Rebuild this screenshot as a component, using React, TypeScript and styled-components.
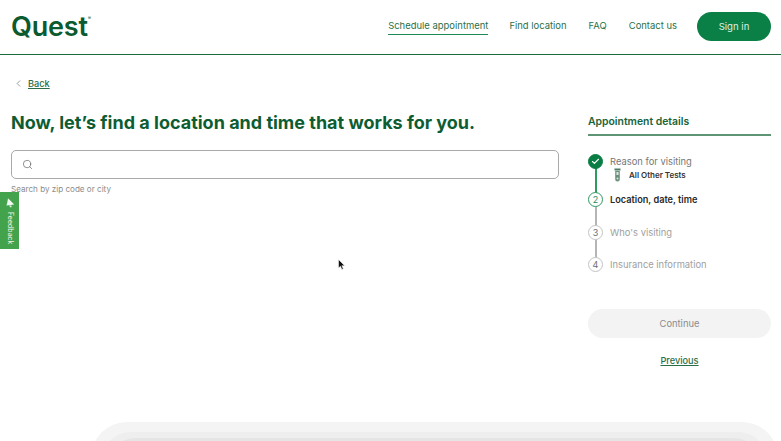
import React from "react";
import styled, { createGlobalStyle } from "styled-components";
import { Check, ChevronLeft, Search } from "lucide-react";

const GlobalStyle = createGlobalStyle`
  html, body {
    margin: 0;
    padding: 0;
    background: #fff;
  }
  body {
    font-family: "Inter", "Liberation Sans", sans-serif;
  }
`;

const Page = styled.div`
  position: relative;
  width: 781px;
  height: 441px;
  overflow: hidden;
  background: #fff;
`;

const Header = styled.header`
  box-sizing: border-box;
  height: 55px;
  padding: 0 10px 1px 11px;
  display: flex;
  align-items: center;
  justify-content: space-between;
  border-bottom: 1.5px solid #1d6a3c;
`;

const Logo = styled.div`
  font-size: 27px;
  line-height: 28px;
  font-weight: 600;
  letter-spacing: -0.2px;
  color: #0b5a30;
  sup {
    font-size: 5px;
    font-weight: 400;
    line-height: 0;
    vertical-align: 16px;
  }
`;

const Nav = styled.nav`
  display: flex;
  align-items: center;
`;

const NavItem = styled.a<{ $active?: boolean; $gap: number }>`
  font-size: 9.45px;
  line-height: 13px;
  color: #2b6f49;
  margin-right: ${(p) => p.$gap}px;
  padding: 1px 0 2px;
  border-bottom: 1px solid ${(p) => (p.$active ? "#1f8a55" : "transparent")};
`;

const SignIn = styled.button`
  width: 74px;
  height: 29px;
  border: 0;
  border-radius: 15px;
  background: #0a8047;
  color: #dff0e6;
  font-family: inherit;
  font-size: 9.6px;
`;

const Body = styled.main`
  display: flex;
  padding: 0 10px 0 11px;
`;

const Left = styled.section`
  width: 548px;
  margin-right: 29px;
`;

const BackRow = styled.div`
  display: flex;
  align-items: center;
  gap: 4px;
  margin: 21px 0 0 2px;
  height: 14px;
  color: #66776c;
`;

const UnderlinedLink = styled.a`
  font-size: 9.2px;
  font-weight: 500;
  line-height: 13px;
  color: #2a6e48;
  text-decoration: underline;
`;

const Title = styled.h1`
  margin: 20px 0 0;
  font-size: 18px;
  line-height: 26px;
  font-weight: 700;
  color: #0d5c32;
`;

const SearchBox = styled.div`
  box-sizing: border-box;
  height: 29px;
  margin-top: 14px;
  padding-left: 10px;
  display: flex;
  align-items: center;
  border: 1px solid #a9a9a9;
  border-radius: 5px;
  color: #555;
`;

const Hint = styled.div`
  margin-top: 4px;
  font-size: 8.1px;
  line-height: 12px;
  color: #8c8c8c;
`;

const Aside = styled.aside`
  width: 183px;
`;

const AsideTitle = styled.div`
  margin-top: 60px;
  padding-bottom: 5px;
  font-size: 10.4px;
  line-height: 14px;
  font-weight: 600;
  color: #17633a;
  border-bottom: 2px solid #5f9474;
`;

const Steps = styled.ol`
  list-style: none;
  margin: 18px 0 0;
  padding: 0;
`;

const Step = styled.li<{ $height: number }>`
  position: relative;
  display: flex;
  gap: 7px;
  height: ${(p) => p.$height}px;
`;

const Rail = styled.span<{ $color: string }>`
  position: absolute;
  left: 7px;
  top: 14px;
  bottom: -2px;
  width: 1.5px;
  background: ${(p) => p.$color};
`;

const Dot = styled.span<{ $state: "done" | "current" | "todo" }>`
  position: relative;
  z-index: 1;
  box-sizing: border-box;
  flex: none;
  width: 15px;
  height: 15px;
  border-radius: 50%;
  display: flex;
  align-items: center;
  justify-content: center;
  font-size: 9px;
  background: ${(p) => (p.$state === "done" ? "#0a7d45" : "#fff")};
  border: 1.5px solid
    ${(p) => (p.$state === "done" ? "#0a7d45" : p.$state === "current" ? "#2f9a63" : "#c4c4c4")};
  color: ${(p) => (p.$state === "done" ? "#fff" : p.$state === "current" ? "#2f8a5b" : "#6f6f6f")};
`;

const StepText = styled.div<{ $state: "done" | "current" | "todo" }>`
  font-size: ${(p) => (p.$state === "current" ? 9.2 : 9.4)}px;
  line-height: 15px;
  font-weight: ${(p) => (p.$state === "current" ? 600 : 400)};
  color: ${(p) => (p.$state === "current" ? "#2a2a2a" : p.$state === "done" ? "#777" : "#a0a0a0")};
`;

const Reason = styled.div`
  display: flex;
  align-items: center;
  gap: 8px;
  margin: -1px 0 0 4px;
  font-size: 8px;
  line-height: 14px;
  font-weight: 600;
  color: #333;
`;

const ContinueButton = styled.button`
  display: block;
  width: 183px;
  height: 29px;
  margin-top: 32px;
  border: 0;
  border-radius: 15px;
  background: #f3f3f3;
  color: #8c8c8c;
  font-family: inherit;
  font-size: 9.4px;
`;

const PreviousRow = styled.div`
  margin-top: 14px;
  text-align: center;
  line-height: 13px;
`;

const FeedbackTab = styled.div`
  position: absolute;
  left: 0;
  top: 192px;
  box-sizing: border-box;
  width: 19px;
  height: 57px;
  padding-top: 6px;
  display: flex;
  flex-direction: column;
  align-items: center;
  gap: 4px;
  background: #43a24c;
  color: #e8f5ea;
`;

const FeedbackLabel = styled.span`
  writing-mode: vertical-rl;
  font-size: 7px;
  line-height: 8px;
`;

const Cursor = styled.svg`
  position: absolute;
  left: 338px;
  top: 259px;
`;

const Sheet = styled.div<{ $bg: string; $pad: string; $radius: number }>`
  box-sizing: border-box;
  height: 70px;
  padding: ${(p) => p.$pad};
  background: ${(p) => p.$bg};
  border-radius: ${(p) => p.$radius}px ${(p) => p.$radius}px 0 0;
`;

const SheetStack = styled.div`
  position: absolute;
  left: 91px;
  top: 422px;
  width: 687px;
`;

const steps = [
  { label: "Location, date, time", state: "current" as const, n: "2", height: 33, rail: "#b5b5b5" },
  { label: "Who's visiting", state: "todo" as const, n: "3", height: 32, rail: "#b5b5b5" },
  { label: "Insurance information", state: "todo" as const, n: "4", height: 20 },
];

const TubeIcon = () => (
  <svg width="7" height="14" viewBox="0 0 7 14">
    <rect x="0.5" y="0.5" width="6" height="2" fill="#4d7c62" />
    <path d="M1.2 3h4.6v8.2a2.3 2.3 0 0 1-4.6 0z" fill="#6b8f7b" />
    <rect x="2.4" y="4" width="2.2" height="3" fill="#d7e3dc" />
    <circle cx="3.5" cy="10.6" r="1" fill="#d7e3dc" />
  </svg>
);

const MegaphoneIcon = () => (
  <svg width="10" height="10" viewBox="0 0 10 10">
    <path d="M3 0.3 9.2 6.4 1.4 7.4 2.2 5z" fill="#f2f9f3" />
    <path d="M4 7.6l2.2-.3.6 1.8-1.6.5z" fill="#cfe8d2" />
  </svg>
);

export default function App() {
  return (
    <Page>
      <GlobalStyle />
      <Header>
        <Logo>
          Quest<sup>®</sup>
        </Logo>
        <Nav>
          <NavItem $active $gap={21}>Schedule appointment</NavItem>
          <NavItem $gap={22}>Find location</NavItem>
          <NavItem $gap={22}>FAQ</NavItem>
          <NavItem $gap={20}>Contact us</NavItem>
          <SignIn>Sign in</SignIn>
        </Nav>
      </Header>
      <Body>
        <Left>
          <BackRow>
            <ChevronLeft size={11} strokeWidth={1.5} />
            <UnderlinedLink>Back</UnderlinedLink>
          </BackRow>
          <Title>Now, let’s find a location and time that works for you.</Title>
          <SearchBox>
            <Search size={11} strokeWidth={1.4} />
          </SearchBox>
          <Hint>Search by zip code or city</Hint>
        </Left>
        <Aside>
          <AsideTitle>Appointment details</AsideTitle>
          <Steps>
            <Step $height={38}>
              <Rail $color="#2f9a63" />
              <Dot $state="done">
                <Check size={9} strokeWidth={3} />
              </Dot>
              <div>
                <StepText $state="done">Reason for visiting</StepText>
                <Reason>
                  <TubeIcon />
                  All Other Tests
                </Reason>
              </div>
            </Step>
            {steps.map((s) => (
              <Step key={s.n} $height={s.height}>
                {s.rail && <Rail $color={s.rail} />}
                <Dot $state={s.state}>{s.n}</Dot>
                <StepText $state={s.state}>{s.label}</StepText>
              </Step>
            ))}
          </Steps>
          <ContinueButton>Continue</ContinueButton>
          <PreviousRow>
            <UnderlinedLink>Previous</UnderlinedLink>
          </PreviousRow>
        </Aside>
      </Body>
      <FeedbackTab>
        <MegaphoneIcon />
        <FeedbackLabel>Feedback</FeedbackLabel>
      </FeedbackTab>
      <Cursor width="8" height="12" viewBox="0 0 8 12">
        <path d="M0.5 0.5v8.5l2-1.8 1.4 3.2 1.4-.6-1.4-3.1h2.8z" fill="#111" stroke="#fff" strokeWidth="0.5" />
      </Cursor>
      <SheetStack>
        <Sheet $bg="#f4f4f4" $pad="10px 10px 0" $radius={36}>
          <Sheet $bg="#eeeeee" $pad="6px 10px 0" $radius={30}>
            <Sheet $bg="#e5e5e5" $pad="0" $radius={24} />
          </Sheet>
        </Sheet>
      </SheetStack>
    </Page>
  );
}
